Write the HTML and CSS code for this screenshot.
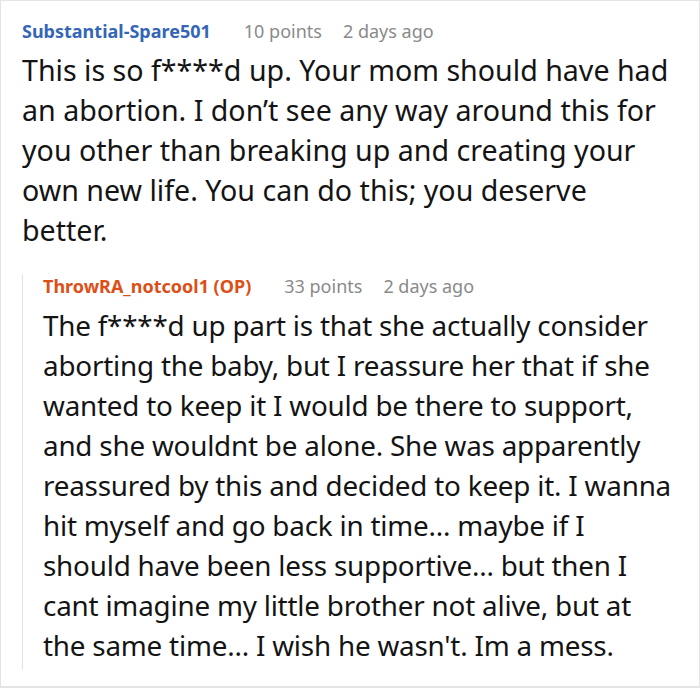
FILE: index.html
```html
<!DOCTYPE html>
<html lang="en">
<head>
    <meta charset="UTF-8">
    <title>Comments</title>
    <link rel="stylesheet" href="styles.css">
</head>
<body>
    <div class="thread">
        <div class="comment">
            <div class="meta">
                <span class="author">Substantial-Spare501</span>
                <span class="info">10 points</span>
                <span class="info">2 days ago</span>
            </div>
            <p class="text">This is so f****d up. Your mom should have had an abortion. I don’t see any way around this for you other than breaking up and creating your own new life. You can do this; you deserve better.</p>

            <div class="comment reply">
                <div class="meta">
                    <span class="author op">ThrowRA_notcool1 (OP)</span>
                    <span class="info">33 points</span>
                    <span class="info">2 days ago</span>
                </div>
                <p class="text">The f****d up part is that she actually consider aborting the baby, but I reassure her that if she wanted to keep it I would be there to support, and she wouldnt be alone. She was apparently reassured by this and decided to keep it. I wanna hit myself and go back in time... maybe if I should have been less supportive... but then I cant imagine my little brother not alive, but at the same time... I wish he wasn't. Im a mess.</p>
            </div>
        </div>
    </div>
</body>
</html>
```

FILE: styles.css
```css
body {
    margin: 0;
    background: #ffffff;
    font-family: "Noto Sans", "Open Sans", sans-serif;
    color: #141414;
}
.thread {
    width: 700px;
    height: 688px;
    box-sizing: border-box;
    border: 1px solid #e4e4e4;
    border-bottom-width: 2px;
    overflow: hidden;
}
.comment {
    padding: 18px 0 0 21px;
}
.meta {
    font-size: 18px;
    line-height: 24px;
    display: flex;
    gap: 21px;
}
.author {
    font-weight: bold;
    color: #3466b7;
    margin-right: 12px;
}
.author.op {
    color: #dc4f17;
}
.info {
    color: #8a8a8a;
}
.text {
    margin: 7px 0 0;
    font-size: 28.6px;
    line-height: 40px;
    padding-right: 20px;
}
.reply {
    margin-top: 33px;
    padding: 0 0 5px 20px;
    border-left: 1px solid #e2e2e2;
}
.reply .meta {
    margin-top: -9px;
}
.reply .text {
    font-size: 27.8px;
    letter-spacing: -0.2px;
}
```
